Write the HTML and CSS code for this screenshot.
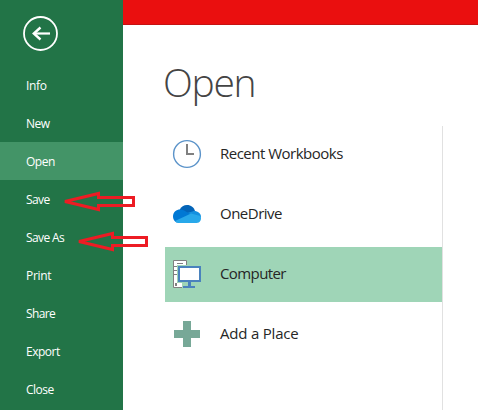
FILE: index.html
```html
<!DOCTYPE html>
<html lang="en">
<head>
<meta charset="utf-8">
<title>Open</title>
<link rel="stylesheet" href="styles.css">
</head>
<body>
<div class="app">
  <nav class="sidebar">
    <div class="back">
      <svg width="36" height="36" viewBox="0 0 36 36" fill="none" stroke="#fff"><circle cx="17.5" cy="17.5" r="16.5" stroke-width="1.8"/><path d="M27 17.500H11" stroke-width="2.200"/><path d="M17.500 11.500L10.800 17.500L17.500 23.500" stroke-width="2.400"/></svg>
    </div>
    <ul class="menu">
      <li class="info"><span>Info</span></li>
      <li class="new"><span>New</span></li>
      <li class="selected"><span>Open</span></li>
      <li class="save"><span>Save</span></li>
      <li class="save-as"><span>Save As</span></li>
      <li class="print"><span>Print</span></li>
      <li class="share"><span>Share</span></li>
      <li class="export"><span>Export</span></li>
      <li class="close"><span>Close</span></li>
    </ul>
  </nav>
  <main class="main">
    <div class="titlebar"></div>
    <h1><span>Open</span></h1>
    <div class="places">
      <div class="place recent">
        <svg width="30" height="30" viewBox="0 0 30 30" fill="none"><circle cx="15" cy="15" r="13.4" fill="#fff" stroke="#5b93c9" stroke-width="1.400"/><path d="M15 5V15H22" stroke="#808080" stroke-width="2"/></svg>
        <span>Recent Workbooks</span>
      </div>
      <div class="place onedrive">
        <svg width="30" height="30" viewBox="0 0 30 30"><path d="M7.500 11C9 7.500 12 6 15 6c4 0 7 2.500 8 6l-6 4z" fill="#0364b8"/><path d="M22 12c4 0 7 2.500 7 6l-3 3-11-7z" fill="#1490df"/><path d="M7 24C3.500 24 1 21 1 17.500 1 13 4.500 10.500 8 10.500c2 0 3.500.5 5 1.500l6 3.500L5 23z" fill="#0078d4"/><path d="M3 22L19 14.500 28.500 17c1.500 3.500-.5 7-4 7H7c-1.500 0-3-.5-4-2z" fill="#28a8ea"/></svg>
        <span>OneDrive</span>
      </div>
      <div class="place computer">
        <svg width="30" height="30" viewBox="0 0 30 30" fill="none"><path d="M1.500 1.500H14.500V28.500H1.500z" fill="#fff" stroke="#808080"/><path d="M5 4.500H11M2 7.500H12M2 11.500H12M2 15.500H12" stroke="#808080"/><path d="M5 6H30V25H25V30H10V25H5z" fill="#9fd5b7"/><path d="M2 8H5V24H10V28H2z" fill="#fff"/><path d="M2 7.500H5M2 11.500H5M2 15.500H5" stroke="#808080"/><path d="M3 24h2v3H3z" fill="#808080"/><path d="M7 8H28V22H7z" fill="#fff" stroke="#4a82bd" stroke-width="2"/><path d="M16 23h3v4h4v2H11v-2h5z" fill="#4a82bd"/></svg>
        <span>Computer</span>
      </div>
      <div class="place add">
        <svg width="30" height="30" viewBox="0 0 30 30"><path d="M11 2h8v9h9v8h-9v9h-8v-9H2v-8h9z" fill="#77a897"/></svg>
        <span>Add a Place</span>
      </div>
    </div>
  </main>
  <svg class="arrow arrow-save" width="74" height="24" viewBox="0 0 74 24"><path d="M3 11.500L36.500 3.500V7.500H71.500V15.500H36.500V19.500z"/></svg>
  <svg class="arrow arrow-save-as" width="74" height="24" viewBox="0 0 74 24"><path d="M3 11.500L36.500 3.500V7.500H70.500V15.500H36.500V19.500z"/></svg>
</div>
</body>
</html>
```
FILE: styles.css
```css
* { box-sizing: border-box; }
body { margin: 0; font-family: "Open Sans", "Noto Sans", sans-serif; background: #fff; }
.app { position: relative; display: flex; width: 478px; height: 410px; overflow: hidden; }
.sidebar { flex: 0 0 123px; height: 410px; background: #227447; color: #fff; }
.back { height: 66px; padding: 16px 0 0 23px; }
.back svg, .place svg { display: block; }
.menu { list-style: none; margin: 0; padding: 0; }
.menu li { height: 38px; padding-left: 26px; line-height: 39px; font-size: 12px; letter-spacing: -0.5px; white-space: nowrap; }
.menu .info, .menu .print { letter-spacing: -0.3px; }
.menu .save, .menu .save-as, .menu .share { letter-spacing: -0.6px; }
.menu .selected { background: #439467; }
.main { flex: 1; display: flex; flex-direction: column; }
.titlebar { height: 25px; flex: none; background: #ea0f0f; border-bottom: 1px solid #c51212; }
h1 { margin: 0; height: 101px; flex: none; padding: 30px 0 0 40px; font-size: 39px; line-height: 54px; font-weight: 300; letter-spacing: -1.3px; color: #444; }
.places { flex: 1; width: 320px; padding: 1px 0 0 42px; border-right: 1px solid #e1e1e1; display: flex; flex-direction: column; gap: 5px; }
.place { height: 55px; flex: none; display: flex; align-items: center; padding: 0 0 1px 7px; gap: 18px; font-size: 15px; color: #262626; white-space: nowrap; }
.place span { padding-bottom: 2px; }
.recent, .onedrive { letter-spacing: -0.5px; }
.computer { letter-spacing: -0.6px; background: #9fd5b7; }
.add { letter-spacing: -0.2px; }
.arrow { position: absolute; fill: none; stroke: #ed1c24; stroke-width: 3; stroke-linejoin: miter; }
.arrow-save { left: 62px; top: 190px; }
.arrow-save-as { left: 76px; top: 230px; }
```
